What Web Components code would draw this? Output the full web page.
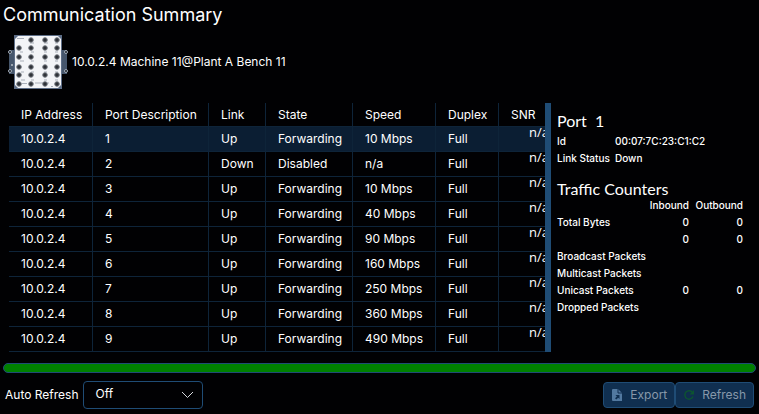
<!DOCTYPE html>
<html lang="en">
<head>
<meta charset="utf-8">
<meta name="viewport" content="width=device-width, initial-scale=1">
<title>Communication Summary</title>
<style>
    :root {
        --line: #0e2439;
        --accent: #1f4c75;
        --selected: #0b1e33;
        --button: #102f50;
        --ok: #008000;
    }

    body {
        margin: 0;
        background: #010103;
        color: #fff;
        font: 400 12px/16px Inter, "Liberation Sans", sans-serif;
    }
</style>
</head>
<body>

<communication-summary></communication-summary>

<template id="communication-summary">
    <style>
        :host {
            display: flex;
            flex-direction: column;
            padding: 3px;
        }

        h1 {
            margin: 0;
            font-size: 18px;
            line-height: 24px;
            font-weight: 400;
        }

        device-title {
            padding: 8px 5px 14px;
        }

        .content {
            display: flex;
            margin: 0 5px 11px 6px;
        }

        port-table {
            flex: 1;
            min-width: 0;
        }

        .splitter {
            width: 6px;
            background: var(--accent);
            cursor: col-resize;
        }

        port-details {
            flex: 0 0 200px;
        }
    </style>
    <h1>Communication Summary</h1>
    <device-title>10.0.2.4 Machine 11@Plant A Bench 11</device-title>
    <div class="content">
        <port-table></port-table>
        <div class="splitter" role="separator" aria-orientation="vertical"></div>
        <port-details></port-details>
    </div>
    <poll-progress></poll-progress>
    <refresh-bar></refresh-bar>
</template>

<template id="device-title">
    <style>
        :host {
            display: flex;
            align-items: center;
            gap: 4px;
        }

        svg {
            flex: none;
        }
    </style>
    <svg width="60" height="54" viewBox="0 0 60 54" aria-hidden="true">
        <path d="M1 15H59V39H1Z" fill="#46566c"/>
        <path d="M6 0H54V54H6Z" fill="#5d6d86"/>
        <path d="M10 1H50L53 4V50L50 53H10L7 50V4Z" fill="#f3f4f7"/>
        <g fill="#111820" stroke="#a4adb9">
            <circle cx="2" cy="17" r="1.500"/>
            <circle cx="2" cy="36" r="1.500"/>
            <circle cx="58" cy="17" r="1.500"/>
            <circle cx="58" cy="36" r="1.500"/>
        </g>
        <circle cx="4" cy="30" r="1" fill="#b9bfc6"/>
        <path d="M9 3.500H16M26 8H22M40 8H36M50 8H47M12 17H15M26 17H23M39 17H36M50 17H47M12 26H16M26 26H23M39 26H36M50 26H47M13 37H16M26 37H23M39 37H36M50 37H47M13 45H17M26 45H23M39 45H36M50 45H47M14 48.500H19M27 48H41M43 51.500H45" stroke="#a9afb9"/>
        <g id="ports" fill="#2f3238" stroke="#777c84"></g>
    </svg>
    <span><slot></slot></span>
</template>

<template id="port-table">
    <style>
        :host {
            display: block;
            overflow: hidden;
        }

        table {
            border-collapse: separate;
            border-spacing: 0;
            table-layout: fixed;
            width: 540px;
            min-width: 100%;
        }

        .ip { width: 84px; }
        .port { width: 116px; }
        .link { width: 57px; }
        .state { width: 87px; }
        .speed { width: 83px; }
        .duplex { width: 63px; }

        th, td {
            box-sizing: border-box;
            height: 25px;
            padding: 0 0 0 12px;
            border-right: 1px solid var(--line);
            border-bottom: 1px solid var(--line);
            font-weight: inherit;
            text-align: left;
            white-space: nowrap;
        }

        th {
            height: 24px;
        }

        th:last-child, td:last-child {
            border-right: 0;
        }

        td:last-child {
            padding: 0;
            font: 400 13px/10px "Open Sans", sans-serif;
            text-align: right;
            vertical-align: top;
        }

        tr.selected {
            background: var(--selected);
        }
    </style>
    <table>
        <thead>
            <tr>
                <th class="ip">IP Address</th>
                <th class="port">Port Description</th>
                <th class="link">Link</th>
                <th class="state">State</th>
                <th class="speed">Speed</th>
                <th class="duplex">Duplex</th>
                <th>SNR</th>
            </tr>
        </thead>
        <tbody></tbody>
    </table>
</template>

<template id="port-details">
    <style>
        :host {
            display: block;
            box-sizing: border-box;
            padding: 8px 8px 0 6px;
            font-size: 10px;
            font-weight: 500;
            line-height: 17px;
        }

        h2 {
            margin: 0;
            font: 400 16px/20px Lato, sans-serif;
            white-space: pre;
        }

        dl {
            display: grid;
            grid-template-columns: 58px 1fr;
            margin: 2px 0 12px;
            white-space: nowrap;
        }

        dd {
            margin: 0;
        }

        table {
            width: 100%;
            border-spacing: 0;
            table-layout: fixed;
        }

        th, td {
            height: 17px;
            padding: 0;
            font-weight: inherit;
            text-align: right;
            white-space: nowrap;
        }

        thead th, thead td {
            height: 15px;
            line-height: 13px;
            vertical-align: top;
        }

        th:first-child {
            text-align: left;
        }

        .name { width: 78px; }
        .out { width: 54px; }
    </style>
    <h2>Port  1</h2>
    <dl>
        <dt>Id</dt><dd>00:07:7C:23:C1:C2</dd>
        <dt>Link Status</dt><dd>Down</dd>
    </dl>
    <h2>Traffic Counters</h2>
    <table>
        <thead>
            <tr><td class="name"></td><th>Inbound</th><th class="out">Outbound</th></tr>
        </thead>
        <tbody>
            <tr><th>Total Bytes</th><td>0</td><td>0</td></tr>
            <tr><th></th><td>0</td><td>0</td></tr>
            <tr><th>Broadcast Packets</th><td></td><td></td></tr>
            <tr><th>Multicast Packets</th><td></td><td></td></tr>
            <tr><th>Unicast Packets</th><td>0</td><td>0</td></tr>
            <tr><th>Dropped Packets</th><td></td><td></td></tr>
        </tbody>
    </table>
</template>

<template id="poll-progress">
    <style>
        :host {
            display: block;
            box-sizing: border-box;
            height: 10px;
            border: 1px solid var(--accent);
            border-radius: 5px;
            background: var(--ok);
        }
    </style>
</template>

<template id="refresh-bar">
    <style>
        :host {
            display: flex;
            align-items: center;
            padding: 8px 2px 0;
        }

        .select {
            display: grid;
            align-items: center;
            width: 120px;
            margin: 0 auto 0 5px;
        }

        select {
            grid-area: 1 / 1;
            appearance: none;
            height: 28px;
            margin: 0;
            padding: 0 30px 2px 11px;
            border: 1px solid var(--accent);
            border-radius: 4px;
            background: transparent;
            color: inherit;
            font: inherit;
        }

        .select svg {
            grid-area: 1 / 1;
            justify-self: end;
            margin-right: 9px;
            pointer-events: none;
        }
    </style>
    <label for="interval">Auto Refresh</label>
    <div class="select">
        <select id="interval">
            <option>Off</option>
        </select>
        <svg width="13" height="8" viewBox="0 0 13 8" fill="none" stroke="#d5d8dc" aria-hidden="true">
            <path d="M1 1L6.500 6.500L12 1"/>
        </svg>
    </div>
    <tool-button>
        <svg slot="icon" width="10" height="12" viewBox="0 0 10 12" aria-hidden="true">
            <path d="M1 0H6L10 4V12H1Q0 12 0 11V1Q0 0 1 0Z" fill="#5279a0"/>
            <path d="M6 0V4H10" fill="none" stroke="#102f50"/>
            <path d="M3.500 6H7.500V10L6.200 8.700L4.300 10.500L3 9.200L4.900 7.400Z" fill="#102f50"/>
        </svg>
        Export
    </tool-button>
    <tool-button>
        <svg slot="icon" width="10" height="12" viewBox="0 0 10 12" aria-hidden="true">
            <path d="M8.500 3.500A4.200 4.200 0 1 0 9 7.500" fill="none" stroke="#0d5431" stroke-width="1.400"/>
            <path d="M10 1V5.500H5.500Z" fill="#0d5431"/>
        </svg>
        Refresh
    </tool-button>
</template>

<template id="tool-button">
    <style>
        :host {
            display: block;
        }

        button {
            display: flex;
            align-items: center;
            gap: 8px;
            height: 26px;
            margin: 0;
            padding: 0 7px 0 8px;
            border: 1px solid var(--accent);
            border-radius: 4px;
            background: var(--button);
            color: #8798aa;
            font: inherit;
        }
    </style>
    <button type="button" disabled><slot name="icon"></slot><span><slot></slot></span></button>
</template>

<script>
    class TemplateElement extends HTMLElement {

        constructor() {
            super();
            this.shadow = this.attachShadow({ mode: "open" });
            this.shadow.append(document.getElementById(this.localName).content.cloneNode(true));
        }

    }

    class DeviceTitle extends TemplateElement {

        connectedCallback() {
            const ports = this.shadow.getElementById('ports');
            ports.innerHTML = '';

            [5, 13, 22, 32, 40, 49].forEach((y, row) => {
                [11, 23, 37, 49].forEach((x, col) => {
                    // no connector below the logo
                    if (row === 0 && col === 0) return;
                    ports.innerHTML += `<circle cx="${x}" cy="${y}" r="2.300"/>`;
                });
            });
        }

    }

    class PortTable extends TemplateElement {

        ports = [
            ['Up', 'Forwarding', '10 Mbps'],
            ['Down', 'Disabled', 'n/a'],
            ['Up', 'Forwarding', '10 Mbps'],
            ['Up', 'Forwarding', '40 Mbps'],
            ['Up', 'Forwarding', '90 Mbps'],
            ['Up', 'Forwarding', '160 Mbps'],
            ['Up', 'Forwarding', '250 Mbps'],
            ['Up', 'Forwarding', '360 Mbps'],
            ['Up', 'Forwarding', '490 Mbps']
        ];

        connectedCallback() {
            const body = this.shadow.querySelector('tbody');

            body.innerHTML = this.ports.map((port, i) => {
                const cells = ['10.0.2.4', i + 1, ...port, 'Full', 'n/a'];
                return `<tr>${cells.map(c => `<td>${c}</td>`).join('')}</tr>`;
            }).join('');

            this.select(body.rows[0]);
            body.addEventListener('click', e => this.select(e.target.closest('tr')));
        }

        select(row) {
            const current = this.shadow.querySelector('.selected');
            if (current) current.classList.remove('selected');
            row.classList.add('selected');
        }

    }

    customElements.define('communication-summary', class extends TemplateElement {});
    customElements.define('device-title', DeviceTitle);
    customElements.define('port-table', PortTable);
    customElements.define('port-details', class extends TemplateElement {});
    customElements.define('poll-progress', class extends TemplateElement {});
    customElements.define('refresh-bar', class extends TemplateElement {});
    customElements.define('tool-button', class extends TemplateElement {});
</script>
</body>
</html>
